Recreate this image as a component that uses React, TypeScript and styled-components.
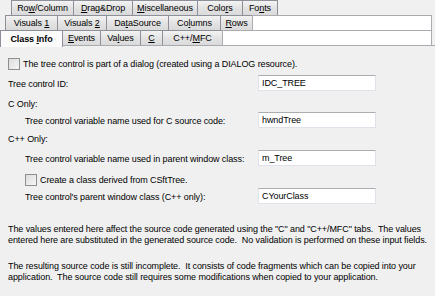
import React from 'react'
import styled, { createGlobalStyle, css } from 'styled-components'

const GlobalStyle = createGlobalStyle`
    html, body {
        margin: 0;
        padding: 0;
        background: #f0f0f0;
    }
    body {
        font-family: 'Liberation Sans', Arial, sans-serif;
        font-size: 9px;
        letter-spacing: -0.09px;
        color: #000;
    }
`

const Window = styled.div`
    width: 435px;
    height: 296px;
    overflow: hidden;
    display: flex;
    flex-direction: column;
    background: #f0f0f0;
`

const TabStrip = styled.div`
    display: flex;
    flex-direction: column;
`

const TabRow = styled.div<{ indent: number }>`
    display: flex;
    flex-direction: row;
    height: 16px;
    padding-left: ${(props) => props.indent}px;
    margin-top: -1px;
    &:first-child {
        margin-top: 0;
    }
`

const Tab = styled.div<{ width: number; selected?: boolean }>`
    box-sizing: border-box;
    width: ${(props) => props.width}px;
    height: 100%;
    margin-left: -1px;
    border: 1px solid #8d9099;
    background: linear-gradient(#f3f3f3, #e3e3e3 50%, #dadada);
    display: flex;
    align-items: center;
    justify-content: center;
    white-space: nowrap;
    &:first-child {
        margin-left: 0;
    }
    ${(props) =>
        props.selected &&
        css`
            height: 17px;
            border-bottom: none;
            background: #fbfbfb;
            font-weight: bold;
            position: relative;
            z-index: 1;
        `}
`

const TabLabel = styled.span`
    white-space: pre;
`

const RowFill = styled.div`
    flex: 1;
    margin-left: -1px;
    margin-right: 3px;
    box-sizing: border-box;
    border: 1px solid #a9abb0;
    background: #ffffff;
`

const Panel = styled.div`
    flex: 1;
    display: flex;
    flex-direction: column;
    border-top: 1px solid #a9abb0;
    margin-top: -1px;
    padding: 0 59px 0 8px;
`

const CheckRow = styled.label<{ indent?: number; gap: number }>`
    display: flex;
    align-items: center;
    gap: 3px;
    height: 13px;
    margin-top: ${(props) => props.gap}px;
    padding-left: ${(props) => props.indent || 0}px;
`

const CheckBox = styled.span`
    box-sizing: border-box;
    width: 12px;
    height: 12px;
    border: 1px solid #8e8f8f;
    background: linear-gradient(135deg, #dcdcdc, #f6f6f6);
    flex: none;
`

const FieldRow = styled.div<{ indent?: number; gap: number }>`
    display: grid;
    grid-template-columns: 1fr 118px;
    align-items: center;
    height: 16px;
    margin-top: ${(props) => props.gap}px;
    padding-left: ${(props) => props.indent || 0}px;
`

const Label = styled.span`
    white-space: nowrap;
    padding-top: 2px;
`

const Edit = styled.input`
    box-sizing: border-box;
    width: 118px;
    height: 16px;
    margin: 0;
    padding: 0 3px;
    border: 1px solid #dfe3e9;
    border-top-color: #abadb3;
    background: #ffffff;
    font: inherit;
    letter-spacing: inherit;
    color: #000;
    outline: none;
`

const SectionLabel = styled.div<{ gap: number }>`
    height: 11px;
    line-height: 11px;
    margin-top: ${(props) => props.gap}px;
`

const Note = styled.p<{ gap: number }>`
    margin: ${(props) => props.gap}px 0 0;
    margin-right: -59px;
    line-height: 11px;
    white-space: pre;
`

const Key = styled.u`
    text-decoration: underline;
`

const App = () => (
    <>
        <GlobalStyle />
        <Window>
            <TabStrip>
                <TabRow indent={11}>
                    <Tab width={63}><TabLabel>Ro<Key>w</Key>/Column</TabLabel></Tab>
                    <Tab width={60}><TabLabel><Key>D</Key>rag&amp;Drop</TabLabel></Tab>
                    <Tab width={66}><TabLabel><Key>M</Key>iscellaneous</TabLabel></Tab>
                    <Tab width={46}><TabLabel>Colo<Key>r</Key>s</TabLabel></Tab>
                    <Tab width={36}><TabLabel>Fo<Key>n</Key>ts</TabLabel></Tab>
                </TabRow>
                <TabRow indent={5}>
                    <Tab width={53}><TabLabel>Visuals <Key>1</Key></TabLabel></Tab>
                    <Tab width={50}><TabLabel>Visuals <Key>2</Key></TabLabel></Tab>
                    <Tab width={63}><TabLabel>Da<Key>t</Key>aSource</TabLabel></Tab>
                    <Tab width={53}><TabLabel>Co<Key>l</Key>umns</TabLabel></Tab>
                    <Tab width={33}><TabLabel><Key>R</Key>ows</TabLabel></Tab>
                    <RowFill />
                </TabRow>
                <TabRow indent={0}>
                    <Tab width={63} selected><TabLabel>Class <Key>I</Key>nfo</TabLabel></Tab>
                    <Tab width={39}><TabLabel><Key>E</Key>vents</TabLabel></Tab>
                    <Tab width={41}><TabLabel>Va<Key>l</Key>ues</TabLabel></Tab>
                    <Tab width={23}><TabLabel><Key>C</Key></TabLabel></Tab>
                    <Tab width={61}><TabLabel>C++/<Key>M</Key>FC</TabLabel></Tab>
                    <RowFill />
                </TabRow>
            </TabStrip>
            <Panel>
                <CheckRow gap={11}>
                    <CheckBox />
                    <span>The tree control is part of a dialog (created using a DIALOG resource).</span>
                </CheckRow>
                <FieldRow gap={5}>
                    <Label>Tree control ID:</Label>
                    <Edit readOnly defaultValue="IDC_TREE" />
                </FieldRow>
                <SectionLabel gap={8}>C Only:</SectionLabel>
                <FieldRow gap={2} indent={17}>
                    <Label>Tree control variable name used for C source code:</Label>
                    <Edit readOnly defaultValue="hwndTree" />
                </FieldRow>
                <SectionLabel gap={6}>C++ Only:</SectionLabel>
                <FieldRow gap={5} indent={17}>
                    <Label>Tree control variable name used in parent window class:</Label>
                    <Edit readOnly defaultValue="m_Tree" />
                </FieldRow>
                <CheckRow gap={7} indent={17}>
                    <CheckBox />
                    <span>Create a class derived from CSftTree.</span>
                </CheckRow>
                <FieldRow gap={2} indent={17}>
                    <Label>Tree control's parent window class (C++ only):</Label>
                    <Edit readOnly defaultValue="CYourClass" />
                </FieldRow>
                <Note gap={20}>
                    {'The values entered here affect the source code generated using the "C" and "C++/MFC" tabs.  The values\n' +
                        'entered here are substituted in the generated source code.  No validation is performed on these input fields.'}
                </Note>
                <Note gap={15}>
                    {'The resulting source code is still incomplete.  It consists of code fragments which can be copied into your\n' +
                        'application.  The source code still requires some modifications when copied to your application.'}
                </Note>
            </Panel>
        </Window>
    </>
)

export default App
